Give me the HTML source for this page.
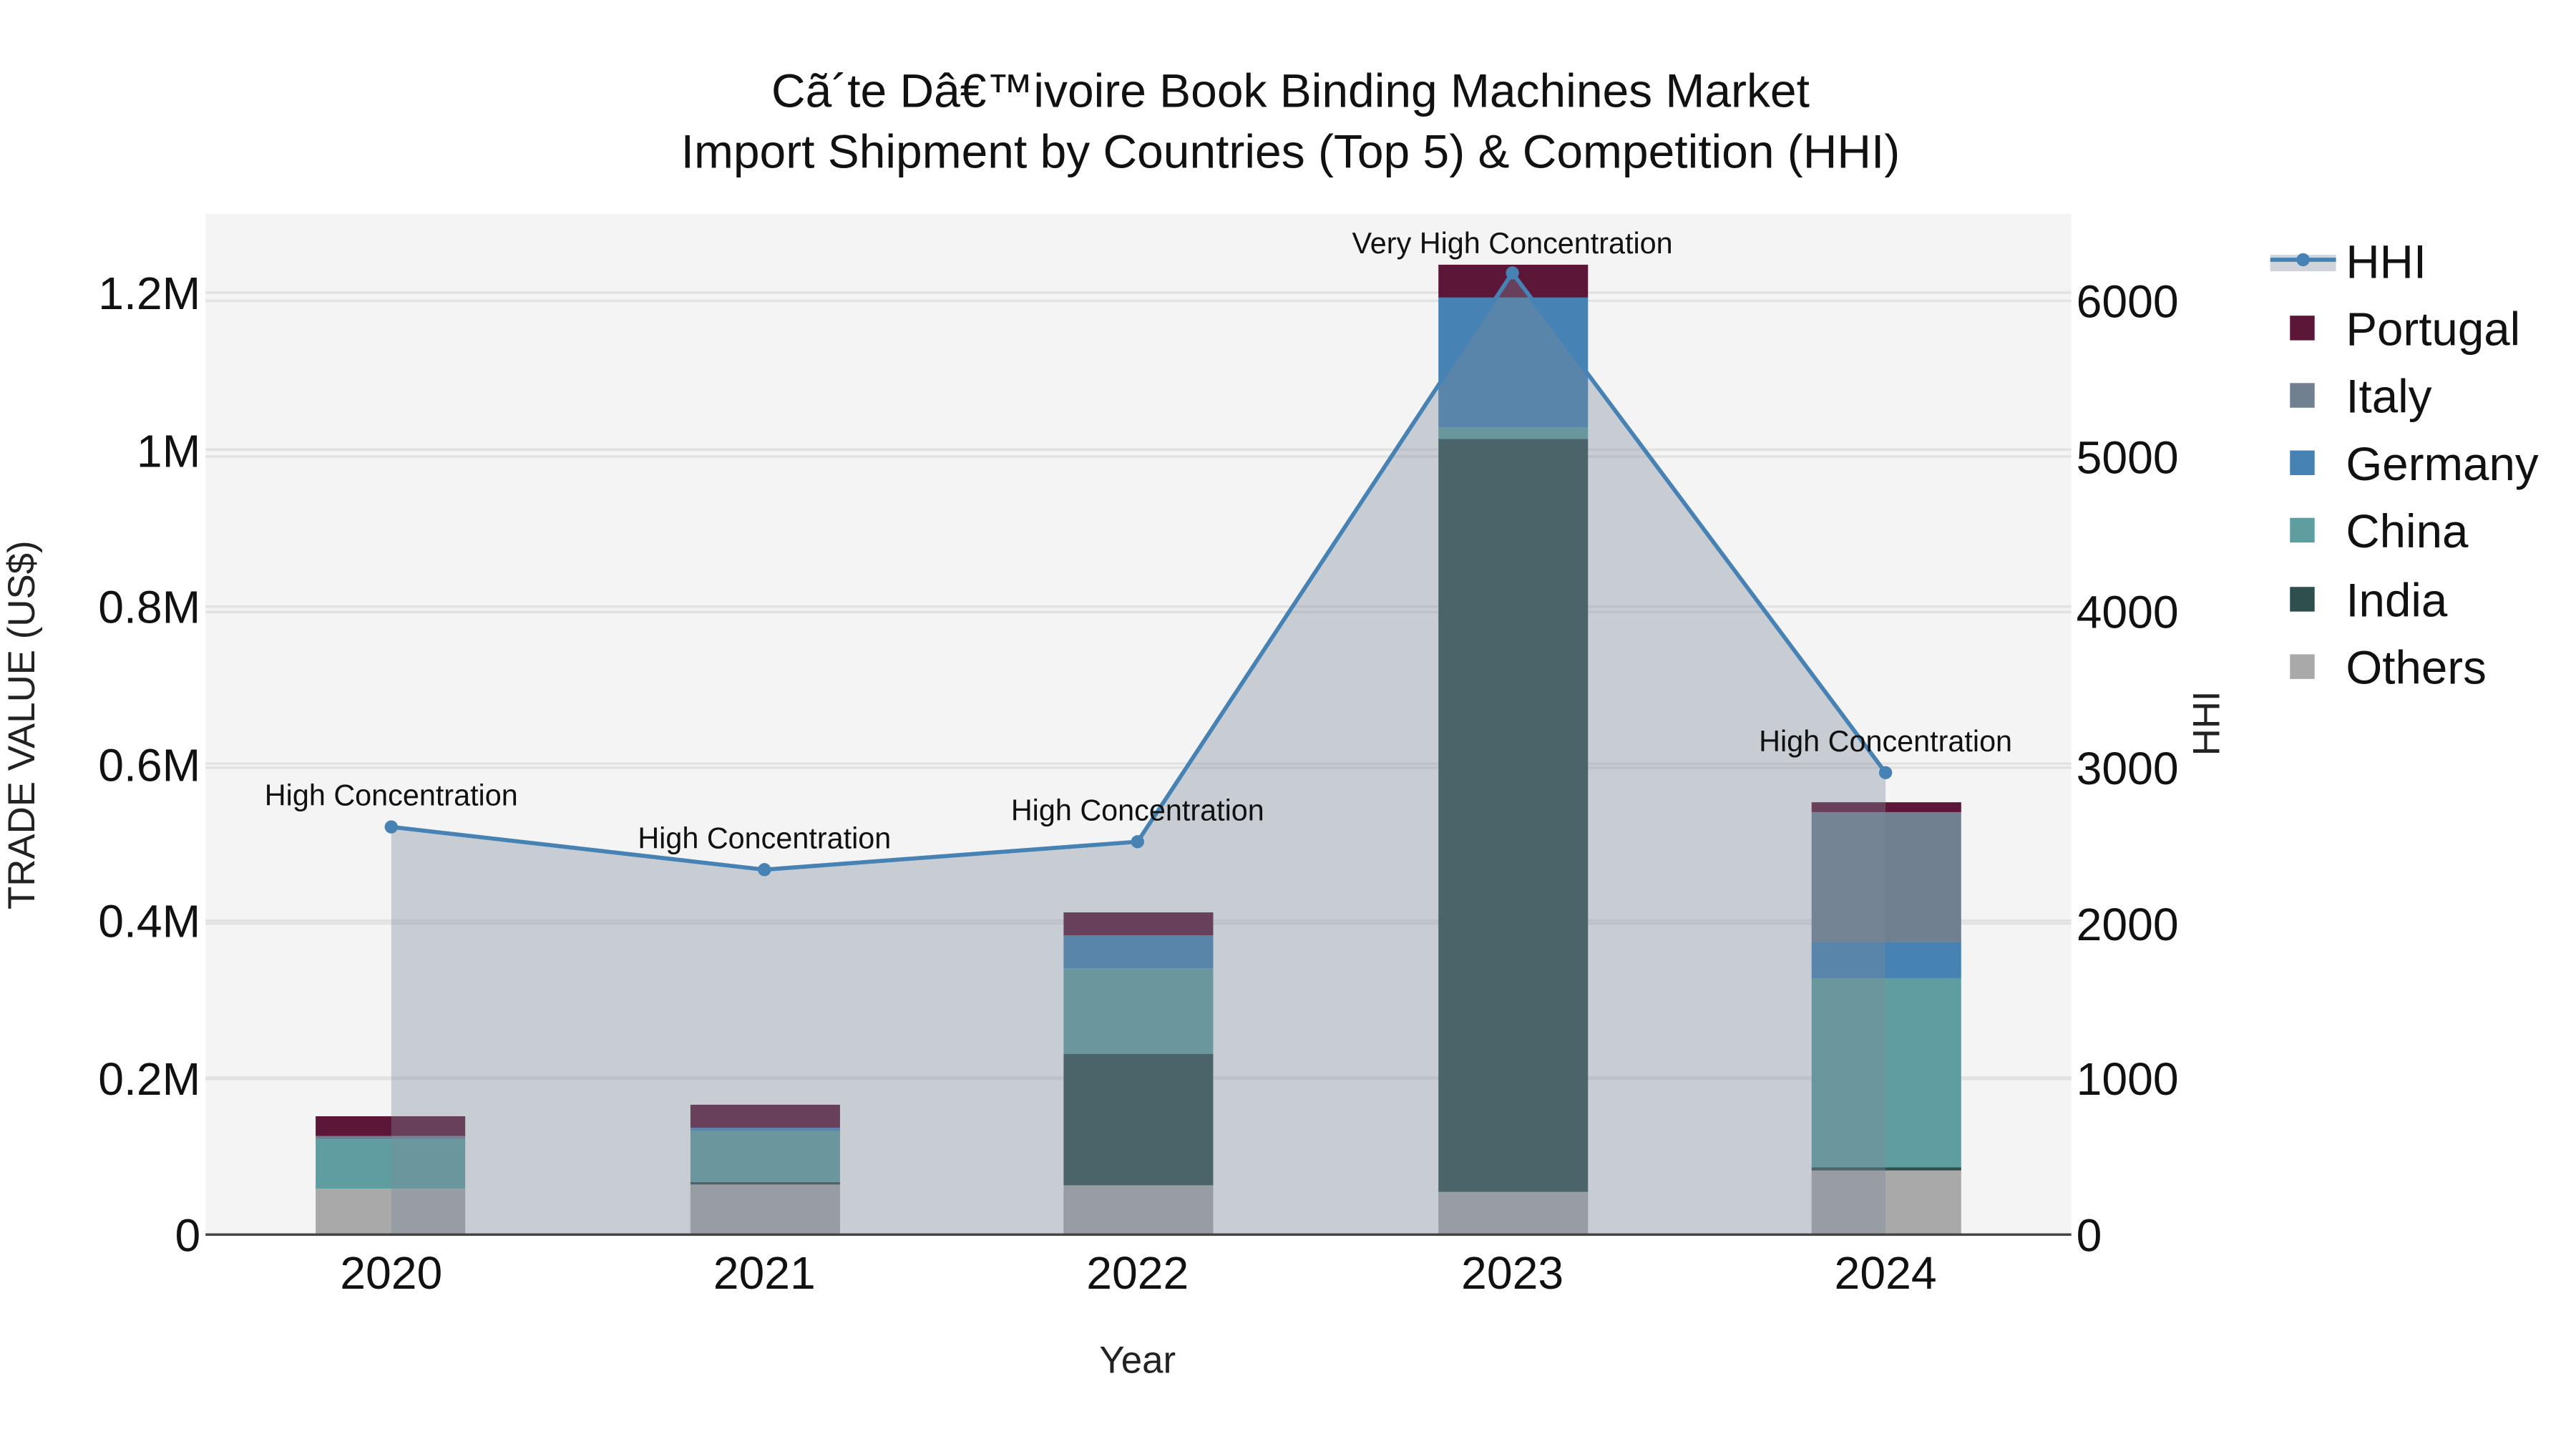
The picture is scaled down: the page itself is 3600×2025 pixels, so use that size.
<!DOCTYPE html>
<html><head><meta charset="utf-8"><style>html,body{margin:0;padding:0;background:#fff}svg{display:block}</style></head>
<body>
<svg width="3600" height="2025" viewBox="0 0 1567 881.4" xmlns="http://www.w3.org/2000/svg" font-family="Liberation Sans, Arial, sans-serif">
<rect width="1567" height="881.4" fill="#fff"/>
<rect x="125" y="130" width="1135" height="621" fill="#f4f4f4"/>
<g stroke="#e2e2e2" stroke-width="1.5">
<line x1="125" x2="1260" y1="178" y2="178"/><line x1="125" x2="1260" y1="273.5" y2="273.5"/><line x1="125" x2="1260" y1="369" y2="369"/><line x1="125" x2="1260" y1="464.5" y2="464.5"/><line x1="125" x2="1260" y1="560" y2="560"/><line x1="125" x2="1260" y1="655.5" y2="655.5"/>
<line x1="125" x2="1260" y1="183" y2="183"/><line x1="125" x2="1260" y1="277.7" y2="277.7"/><line x1="125" x2="1260" y1="372.3" y2="372.3"/><line x1="125" x2="1260" y1="467" y2="467"/><line x1="125" x2="1260" y1="561.7" y2="561.7"/><line x1="125" x2="1260" y1="656.3" y2="656.3"/>
</g>
<g>
<rect x="192" y="723" width="91" height="28" fill="#a9a9a9"/><rect x="192" y="693" width="91" height="30" fill="#5f9ea0"/><rect x="192" y="691" width="91" height="2" fill="#708090"/><rect x="192" y="679" width="91" height="12" fill="#5c1638"/>
<rect x="420" y="720" width="91" height="31" fill="#a9a9a9"/><rect x="420" y="719" width="91" height="1.5" fill="#2f4f4f"/><rect x="420" y="688" width="91" height="31" fill="#5f9ea0"/><rect x="420" y="686" width="91" height="2" fill="#4682b4"/><rect x="420" y="672" width="91" height="14" fill="#5c1638"/>
<rect x="647" y="721" width="91" height="30" fill="#a9a9a9"/><rect x="647" y="641" width="91" height="80" fill="#2f4f4f"/><rect x="647" y="589" width="91" height="52" fill="#5f9ea0"/><rect x="647" y="569" width="91" height="20" fill="#4682b4"/><rect x="647" y="555" width="91" height="14" fill="#5c1638"/>
<rect x="875" y="725" width="91" height="26" fill="#a9a9a9"/><rect x="875" y="267" width="91" height="458" fill="#2f4f4f"/><rect x="875" y="260" width="91" height="7" fill="#5f9ea0"/><rect x="875" y="181" width="91" height="79" fill="#4682b4"/><rect x="875" y="161" width="91" height="20" fill="#5c1638"/>
<rect x="1102" y="712" width="91" height="39" fill="#a9a9a9"/><rect x="1102" y="710" width="91" height="2" fill="#2f4f4f"/><rect x="1102" y="595" width="91" height="115" fill="#5f9ea0"/><rect x="1102" y="573" width="91" height="22" fill="#4682b4"/><rect x="1102" y="494" width="91" height="79" fill="#708090"/><rect x="1102" y="488" width="91" height="6" fill="#5c1638"/>
</g>
<polygon points="238,751 238,503 465,529 692,512 920,166 1147,470 1147,751" fill="rgba(126,137,155,0.37)"/>
<line x1="125" x2="1260" y1="751" y2="751" stroke="#444" stroke-width="1.5"/>
<polyline points="238,503 465,529 692,512 920,166 1147,470" fill="none" stroke="#4682b4" stroke-width="2.5"/>
<g fill="#4682b4"><circle cx="238" cy="503" r="4"/><circle cx="465" cy="529" r="4"/><circle cx="692" cy="512" r="4"/><circle cx="920" cy="166" r="4"/><circle cx="1147" cy="470" r="4"/></g>
<g font-size="18" fill="#111" text-anchor="middle">
<text x="238" y="490">High Concentration</text><text x="465" y="516">High Concentration</text><text x="692" y="499">High Concentration</text><text x="920" y="154">Very High Concentration</text><text x="1147" y="457">High Concentration</text>
</g>
<g font-size="28.7" fill="#111" text-anchor="middle">
<text x="785" y="65">Cã´te Dâ€™ivoire Book Binding Machines Market</text>
<text x="785" y="102">Import Shipment by Countries (Top 5) &amp; Competition (HHI)</text>
</g>
<g font-size="28" fill="#111" text-anchor="end">
<text x="122" y="761">0</text><text x="122" y="666">0.2M</text><text x="122" y="570">0.4M</text><text x="122" y="475">0.6M</text><text x="122" y="379">0.8M</text><text x="122" y="284">1M</text><text x="122" y="188">1.2M</text>
</g>
<g font-size="28" fill="#111">
<text x="1263" y="761">0</text><text x="1263" y="666">1000</text><text x="1263" y="572">2000</text><text x="1263" y="477">3000</text><text x="1263" y="382">4000</text><text x="1263" y="288">5000</text><text x="1263" y="193">6000</text>
</g>
<g font-size="28" fill="#111" text-anchor="middle">
<text x="238" y="784">2020</text><text x="465" y="784">2021</text><text x="692" y="784">2022</text><text x="920" y="784">2023</text><text x="1147" y="784">2024</text>
</g>
<text x="692" y="835" font-size="23" fill="#222" text-anchor="middle">Year</text>
<text transform="translate(21,441) rotate(-90)" font-size="23" fill="#222" text-anchor="middle">TRADE VALUE (US$)</text>
<text transform="translate(1350,440) rotate(-90)" font-size="23" fill="#222" text-anchor="middle">HHI</text>
<g>
<rect x="1381" y="155" width="40" height="10" fill="rgba(126,137,155,0.37)"/>
<line x1="1381" x2="1421" y1="158" y2="158" stroke="#4682b4" stroke-width="2.5"/><circle cx="1401" cy="158" r="4" fill="#4682b4"/>
<rect x="1393" y="192" width="15" height="15" fill="#5c1638"/>
<rect x="1393" y="233" width="15" height="15" fill="#708090"/>
<rect x="1393" y="274" width="15" height="15" fill="#4682b4"/>
<rect x="1393" y="315" width="15" height="15" fill="#5f9ea0"/>
<rect x="1393" y="357" width="15" height="15" fill="#2f4f4f"/>
<rect x="1393" y="398" width="15" height="15" fill="#a9a9a9"/>
</g>
<g font-size="28.5" fill="#111">
<text x="1427" y="169">HHI</text><text x="1427" y="210">Portugal</text><text x="1427" y="251">Italy</text><text x="1427" y="292">Germany</text><text x="1427" y="333">China</text><text x="1427" y="375">India</text><text x="1427" y="416">Others</text>
</g>
</svg>
</body></html>
